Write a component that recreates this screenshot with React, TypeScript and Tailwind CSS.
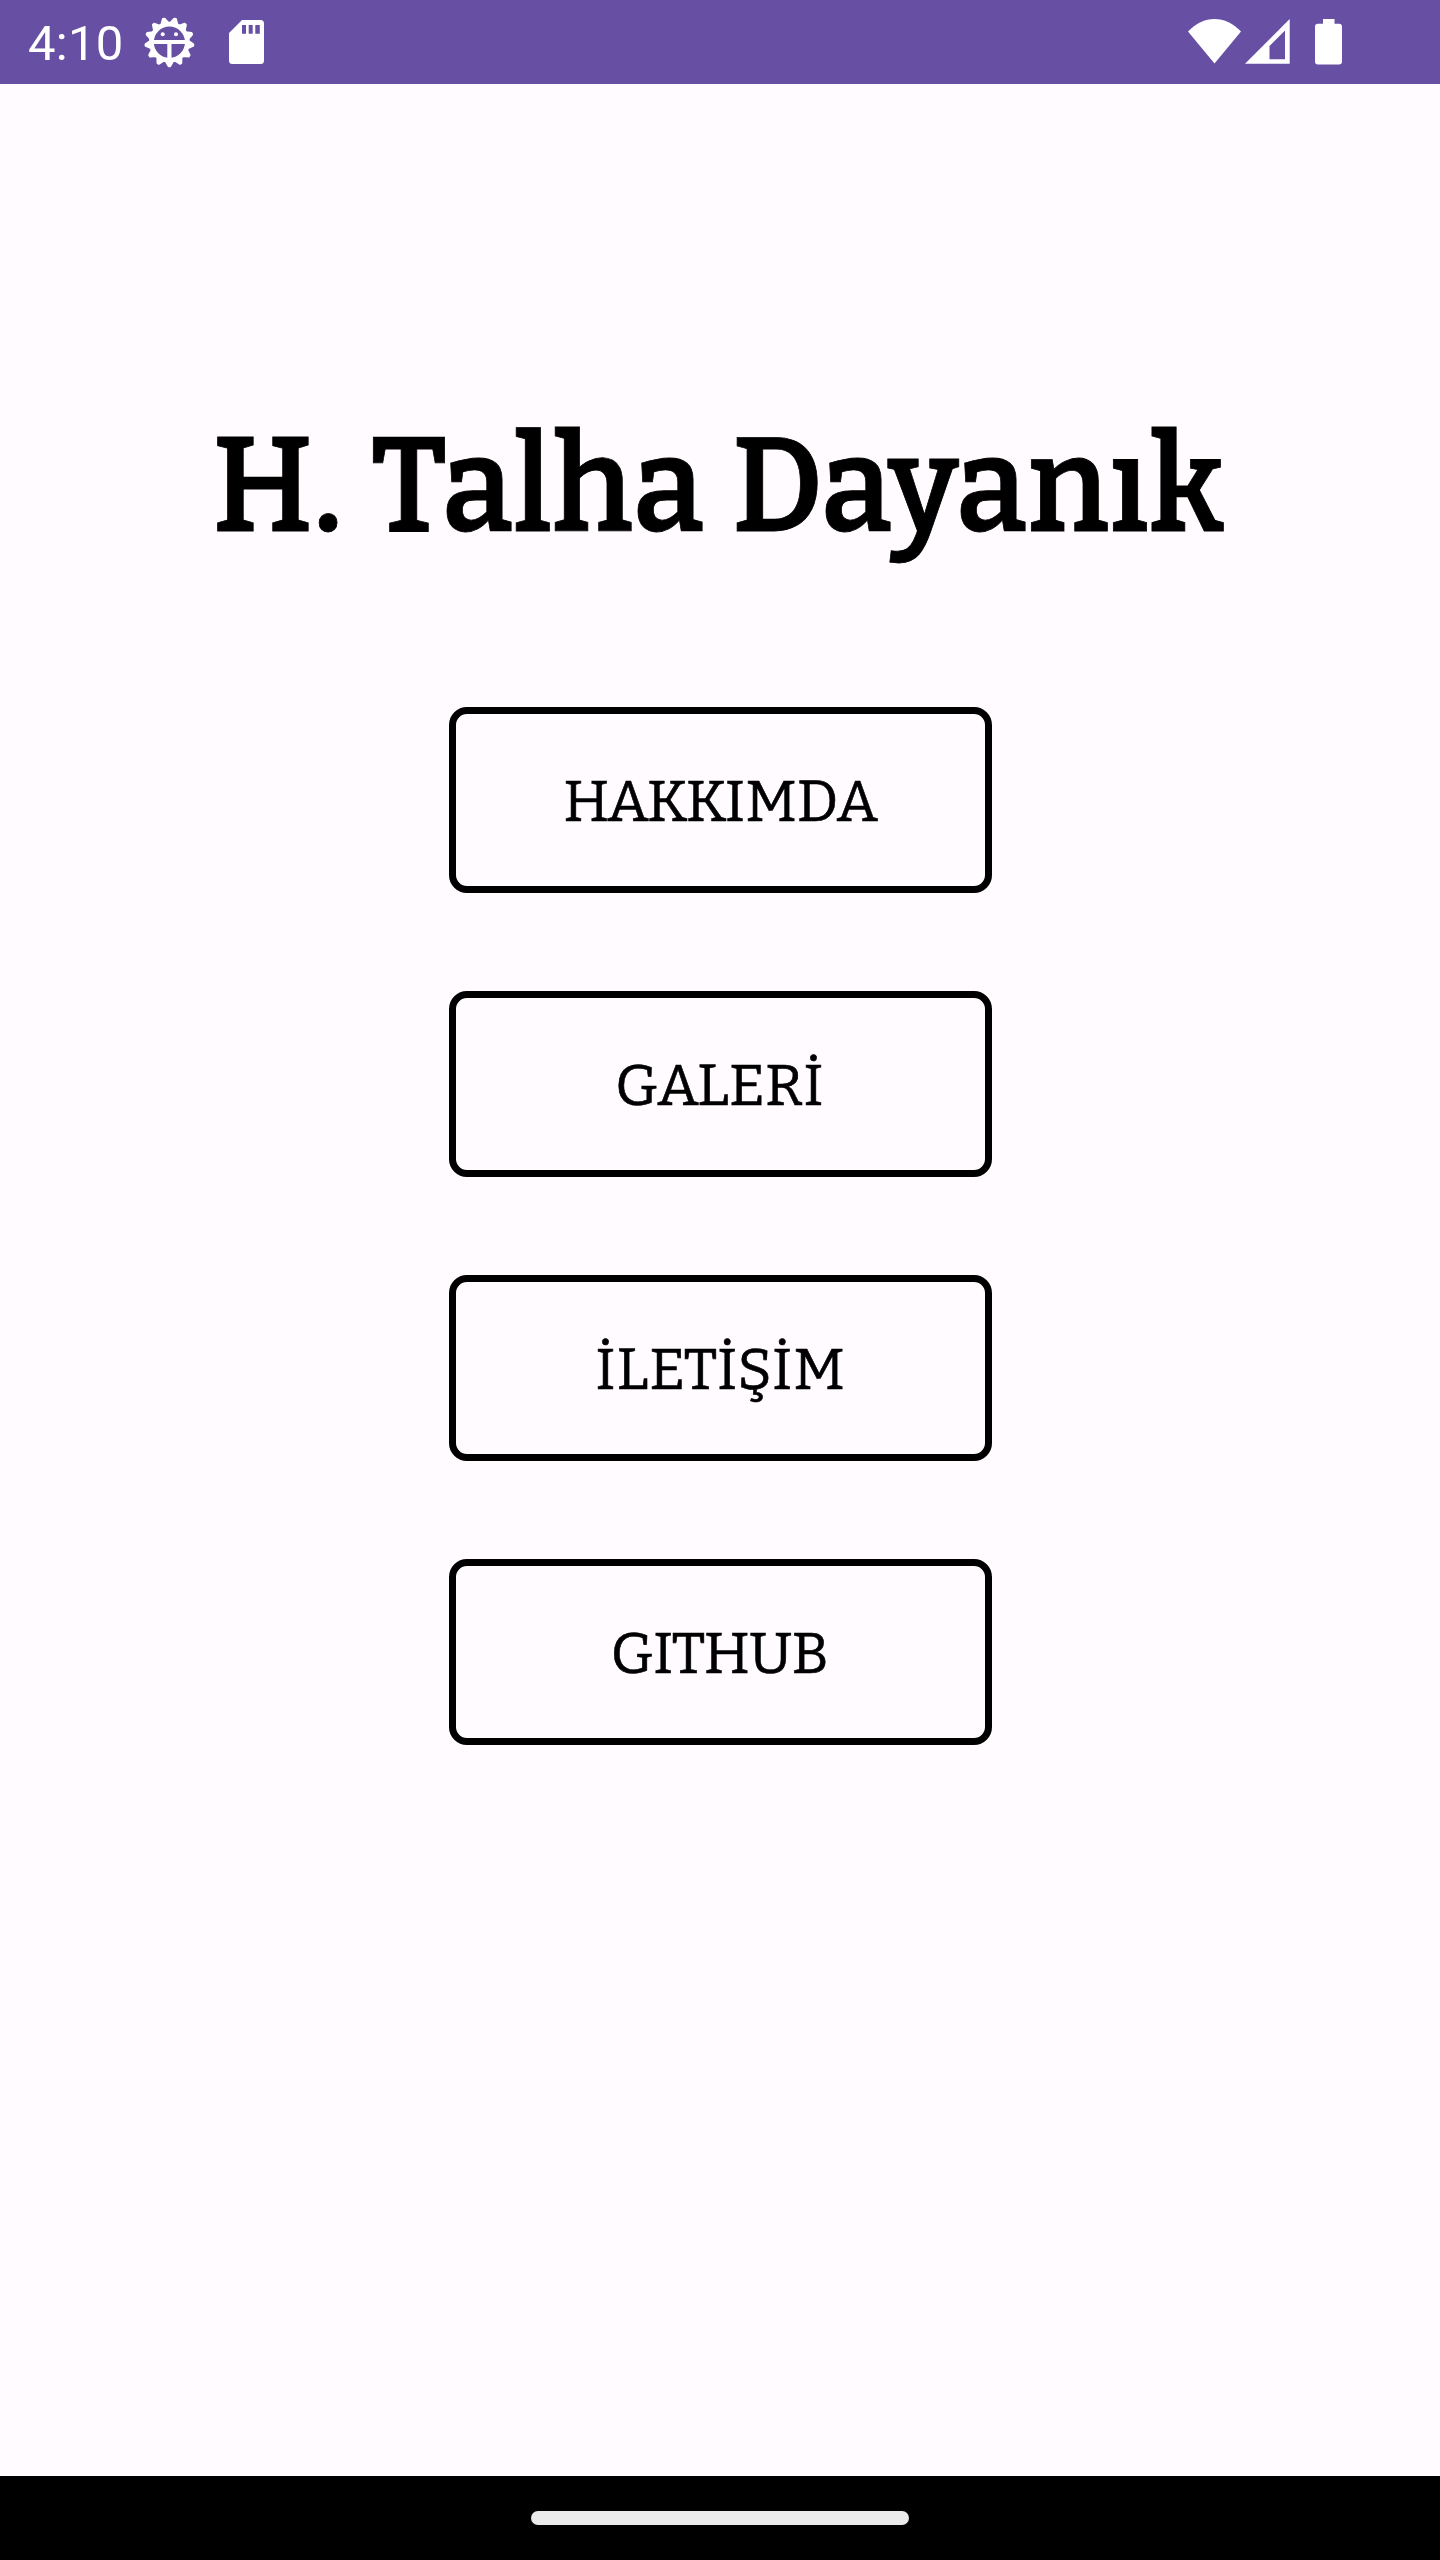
import React from 'react';

const links = [
  { label: 'HAKKIMDA', spacing: 'tracking-[-0.1px] pr-0' },
  { label: 'GALERİ', spacing: 'tracking-normal pr-[2px]' },
  { label: 'İLETİŞİM', spacing: 'tracking-[0.8px] pr-0' },
  { label: 'GITHUB', spacing: 'tracking-[-0.5px] pr-[2px]' },
];

const TEETH = 13;

/** Outline of the debug gear: one short tooth every 360/13 degrees. */
const gearPoints = Array.from({ length: TEETH }, (_, i) => {
  const at = (radius: number, step: number) => {
    const a = Math.PI / 2 + ((i + step) * 2 * Math.PI) / TEETH;
    return `${(25.4 + radius * Math.cos(a)).toFixed(2)},${(25.2 + radius * Math.sin(a)).toFixed(2)}`;
  };
  return [at(19.3, -0.36), at(23.8, -0.06), at(23.8, 0.06), at(19.3, 0.36)].join(' ');
}).join(' ');

function DebugIcon() {
  return (
    <svg width="50" height="50" viewBox="0 0 50 50" className="shrink-0 overflow-visible">
      <polygon points={gearPoints} fill="#fff" stroke="#fff" strokeWidth="2.4" strokeLinejoin="round" />
      <circle cx="25.4" cy="25.2" r="15.6" fill="#6750a4" />
      <path d="M9.400 25h32M25.400 25v16" stroke="#fff" strokeWidth="4.2" />
      <circle cx="18.700" cy="17.300" r="2" fill="#fff" />
      <circle cx="32" cy="17.300" r="2" fill="#fff" />
    </svg>
  );
}

function SdCardIcon() {
  return (
    <svg width="35" height="44" viewBox="0 0 35 44" className="shrink-0">
      <path
        fill="#fff"
        fillRule="evenodd"
        d="M13 0h18.500a3.500 3.500 0 0 1 3.500 3.500v37a3.500 3.500 0 0 1-3.500 3.500h-28a3.500 3.500 0 0 1-3.500-3.500V13zM13 5v8.700h4V5zM19.700 5v8.700h4V5zM26.300 5v8.700h4.500V5z"
      />
    </svg>
  );
}

function WifiIcon() {
  return (
    <svg width="53" height="45" viewBox="0 0 53 45" className="shrink-0">
      <path fill="#fff" d="M0 12.500C7.500 4.500 17 0 26.500 0S45.500 4.500 53 12.500L26.500 44.500z" />
    </svg>
  );
}

function SignalIcon() {
  return (
    <svg width="45" height="45" viewBox="0 0 45 45" className="shrink-0">
      <path fill="#fff" fillRule="evenodd" d="M0 44.700 44.700 0v44.700zM24.500 40.200h15.500V11.500L24.500 27z" />
    </svg>
  );
}

function BatteryIcon() {
  return (
    <svg width="27" height="46" viewBox="0 0 27 46" className="shrink-0">
      <path
        fill="#fff"
        d="M8 0h11.500v4.800H24a3 3 0 0 1 3 3v34.800a3 3 0 0 1-3 3H3a3 3 0 0 1-3-3V7.800a3 3 0 0 1 3-3h5z"
      />
    </svg>
  );
}

export default function App() {
  return (
    <div className="flex h-[2560px] w-[1440px] flex-col overflow-hidden bg-[#fffbff]">
      <header className="flex h-[84px] shrink-0 items-start justify-between bg-[#6750a4] pr-[98px] pl-[28px] text-white">
        <div className="flex items-start">
          <span className="mt-[15px] w-[116px] font-[Roboto,sans-serif] text-[49px] leading-[57px] tracking-[0.3px]">4:10</span>
          <div className="mt-[17px]">
            <DebugIcon />
          </div>
          <div className="mt-[20px] ml-[35px]">
            <SdCardIcon />
          </div>
        </div>
        <div className="mt-[19px] flex items-start">
          <WifiIcon />
          <div className="ml-[4px]">
            <SignalIcon />
          </div>
          <div className="ml-[25px]">
            <BatteryIcon />
          </div>
        </div>
      </header>

      <main className="flex flex-1 flex-col items-center pt-[323px] font-[Bitter,'DejaVu_Serif_Condensed',serif] text-black">
        <h1 className="mr-[3px] scale-x-[0.952] text-[134px] leading-[160px] font-semibold tracking-[0.4px] whitespace-nowrap [-webkit-text-stroke:0.8px_black] [word-spacing:3.5px]">
          H. Talha Dayanık
        </h1>
        <nav className="mt-[140px] ml-px flex w-[543px] flex-col gap-[98px]">
          {links.map(({ label, spacing }) => (
            <button
              key={label}
              className={`flex h-[186px] w-full items-center justify-center rounded-[18px] border-[7px] border-black pt-[3px] text-[58px] [-webkit-text-stroke:0.6px_black] [font-weight:450] ${spacing}`}
            >
              {label}
            </button>
          ))}
        </nav>
      </main>

      <footer className="flex h-[84px] shrink-0 items-center justify-center bg-black">
        <div className="h-[14px] w-[378px] rounded-full bg-[#ebebeb]" />
      </footer>
    </div>
  );
}
